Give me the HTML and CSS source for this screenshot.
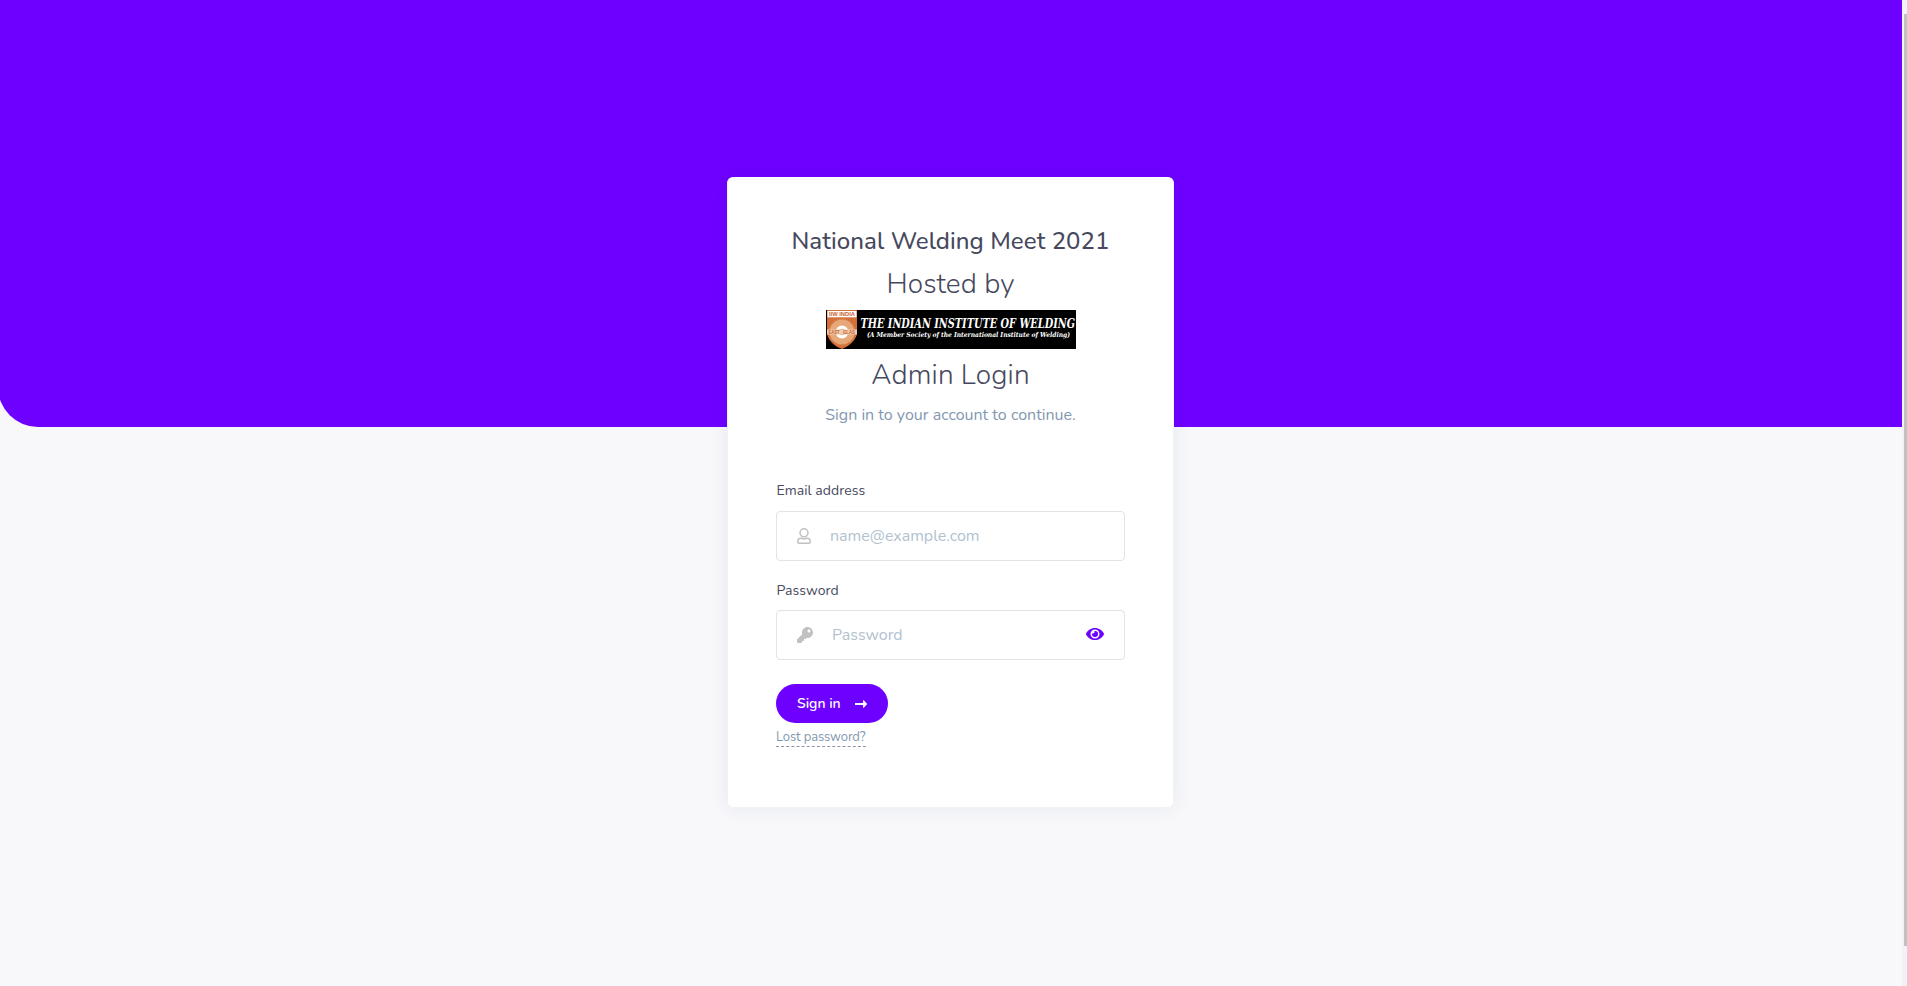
FILE: index.html
```html
<!DOCTYPE html>
<html lang="en">
<head>
<meta charset="utf-8">
<title>National Welding Meet 2021</title>
<link rel="stylesheet" href="styles.css">
</head>
<body>
<div class="banner"></div>
<main class="page">
  <section class="card">
    <h1 class="title">National Welding Meet 2021</h1>
    <h2 class="heading hosted">Hosted by</h2>
    <svg class="logo" viewBox="0 0 250 39" role="img" aria-label="The Indian Institute of Welding">
      <rect width="250" height="39" fill="#000"/>
      <path d="M1 0H31V24C29 32 21 37 16 39C10 37 3 32 1 24Z" fill="#d36f38"/>
      <circle cx="16" cy="22" r="12.5" fill="#e6a878"/>
      <circle cx="16" cy="22" r="13" fill="none" stroke="#e0935d" stroke-width="1" stroke-dasharray="1 1"/>
      <circle cx="16" cy="22" r="6.5" fill="#fff"/>
      <circle cx="16" cy="22" r="3.2" fill="#e6a878"/>
      <rect x="1" y="19.5" width="30" height="5" fill="#f0cdb3"/>
      <rect x="1.5" y="1" width="29" height="6.3" fill="#fff"/>
      <text class="crest" x="3" y="6.4" font-size="6" textLength="26" lengthAdjust="spacingAndGlyphs">IIW INDIA</text>
      <text class="crest" x="2.5" y="23.7" font-size="4.8" textLength="11" lengthAdjust="spacingAndGlyphs">EAST</text>
      <text class="crest" x="17" y="23.7" font-size="4.8" textLength="12" lengthAdjust="spacingAndGlyphs">GLAS</text>
      <text class="name" x="34.5" y="17.5" font-size="12" textLength="214.5" lengthAdjust="spacingAndGlyphs">THE INDIAN INSTITUTE OF WELDING</text>
      <text class="name" x="41" y="27" font-size="6.8" textLength="203" lengthAdjust="spacingAndGlyphs">(A Member Society of the International Institute of Welding)</text>
    </svg>
    <h2 class="heading admin">Admin Login</h2>
    <p class="lead">Sign in to your account to continue.</p>
    <form class="form">
      <label class="label">Email address</label>
      <div class="field">
        <svg class="icon-user" viewBox="0 0 14 16"><circle cx="7" cy="4.8" r="4" /><path d="M3.7 10.2C1.8 10.2.8 11.6.8 13.4V14.2C.8 14.8 1.2 15.2 1.8 15.2H12.2C12.8 15.2 13.2 14.8 13.2 14.2V13.4C13.2 11.6 12.2 10.2 10.3 10.2C9.3 10.2 8.6 10.7 7 10.7S4.7 10.2 3.7 10.2Z"/></svg>
        <span class="placeholder">name@example.com</span>
      </div>
      <label class="label second">Password</label>
      <div class="field">
        <svg class="icon-key" viewBox="0 0 512 512"><path d="M512 176.001C512 273.203 433.202 352 336 352c-11.22 0-22.19-1.062-32.827-3.069l-24.012 27.014A23.999 23.999 0 0 1 261.223 384H224v40c0 13.255-10.745 24-24 24h-40v40c0 13.255-10.745 24-24 24H24c-13.255 0-24-10.745-24-24v-78.059c0-6.365 2.529-12.47 7.029-16.971l161.802-161.802C163.108 213.814 160 195.271 160 176 160 78.798 238.797.001 335.999 0 433.488-.001 512 78.511 512 176.001zM336 128c0 26.51 21.49 48 48 48s48-21.49 48-48-21.49-48-48-48-48 21.49-48 48z"/></svg>
        <span class="placeholder">Password</span>
        <svg class="icon-eye" viewBox="0 0 576 512"><path d="M572.52 241.4C518.29 135.59 410.93 64 288 64S57.68 135.64 3.48 241.41a32.35 32.35 0 0 0 0 29.19C57.71 376.41 165.07 448 288 448s230.32-71.64 284.52-177.41a32.35 32.35 0 0 0 0-29.19zM288 400a144 144 0 1 1 144-144 143.93 143.93 0 0 1-144 144zm0-240a95.31 95.31 0 0 0-25.31 3.79 47.85 47.85 0 0 1-66.9 66.9A95.78 95.78 0 1 0 288 160z"/></svg>
      </div>
      <button class="button" type="button"><span>Sign in</span>
        <svg class="icon-arrow" viewBox="0 0 12 8"><path d="M0 2.9H8V.8C8 .2 8.6 0 9 .4L11.8 3.4C12.1 3.7 12.1 4.2 11.8 4.5L9 7.5C8.6 7.9 8 7.6 8 7.1V5H0Z"/></svg>
      </button>
      <a class="lost">Lost password?</a>
    </form>
  </section>
</main>
<div class="scrollbar"><div class="thumb"></div></div>
</body>
</html>
```

FILE: styles.css
```css
* { box-sizing: border-box; }
body {
  margin: 0;
  height: 986px;
  overflow: hidden;
  background: #f8f8fb;
  font-family: Nunito, "Noto Sans", "Open Sans", sans-serif;
  color: #46495d;
  display: grid;
  grid-template-columns: 1902px 5px;
  grid-template-rows: 427px 559px;
}
.banner {
  grid-area: 1 / 1;
  margin-left: -2px;
  background: #6e00ff;
  border-bottom-left-radius: 40px;
}
.page {
  grid-area: 1 / 1 / 3 / 2;
  display: flex;
  justify-content: center;
  align-items: flex-start;
  padding-top: 177px;
}
.card {
  width: 447px;
  height: 631px;
  margin-right: 1px;
  padding: 49px 48px 48px;
  border: 1px solid #f1f2f7;
  border-top-color: #fff;
  border-radius: 6px;
  background: #fff;
  box-shadow: 0 0 20px rgba(31, 45, 110, .08);
  display: flex;
  flex-direction: column;
  align-items: center;
  white-space: nowrap;
}
h1, h2, p { margin: 0; }
.title { font-size: 24px; line-height: 28px; font-weight: 500; letter-spacing: .08px; }
.heading { font-size: 28px; line-height: 34px; font-weight: 340; letter-spacing: .12px; }
.hosted { margin-top: 12px; }
.logo { display: block; width: 250px; height: 39px; margin-top: 9px; flex: none; overflow: visible; }
.name { font-family: "DejaVu Serif", serif; font-weight: 700; font-style: italic; fill: #fff; }
.crest { font-family: "Liberation Sans", sans-serif; font-weight: 700; fill: #c9612c; }
.admin { margin-top: 9px; }
.lead { margin-top: 11px; font-size: 16px; line-height: 24px; color: #8398b0; }
.form {
  width: 349px;
  margin-top: 54px;
  display: flex;
  flex-direction: column;
  align-items: flex-start;
}
.label { font-size: 14px; line-height: 20px; letter-spacing: .05px; padding-left: .5px; }
.second { margin-top: 20px; }
.field {
  width: 349px;
  height: 50px;
  margin-top: 10px;
  padding: 0 20px;
  border: 1px solid #e2e3e6;
  border-radius: 4px;
  display: flex;
  align-items: center;
}
.second + .field { margin-top: 9px; }
.placeholder { font-size: 16px; line-height: 24px; color: #b1c2cf; }
.icon-user { width: 14px; height: 16px; margin-right: 19px; fill: none; stroke: #c1c1c4; stroke-width: 1.5; }
.icon-key { width: 16px; height: 16px; margin-right: 19px; fill: #c1c1c4; }
.icon-eye { width: 18px; height: 16px; margin-left: auto; margin-top: -3px; fill: #6e00ff; }
.button {
  width: 112px;
  height: 39px;
  margin-top: 24px;
  padding: 0 21px;
  border: 0;
  border-radius: 20px;
  background: #6e00ff;
  color: #fff;
  font: 600 14px/20px Nunito, "Noto Sans", sans-serif;
  display: flex;
  align-items: center;
  justify-content: space-between;
}
.icon-arrow { width: 12px; height: 8px; fill: #fff; }
.lost {
  width: 90px;
  height: 20px;
  margin-top: 4px;
  border-bottom: 1px dashed #8d93aa;
  font-size: 13px;
  line-height: 20px;
  letter-spacing: -.12px;
  color: #8398b0;
}
.scrollbar { grid-area: 1 / 2 / 3 / 3; background: #f1f1f6; padding: 14px 0 0 2px; }
.thumb { height: 932px; background: #c1c1c1; }
```
